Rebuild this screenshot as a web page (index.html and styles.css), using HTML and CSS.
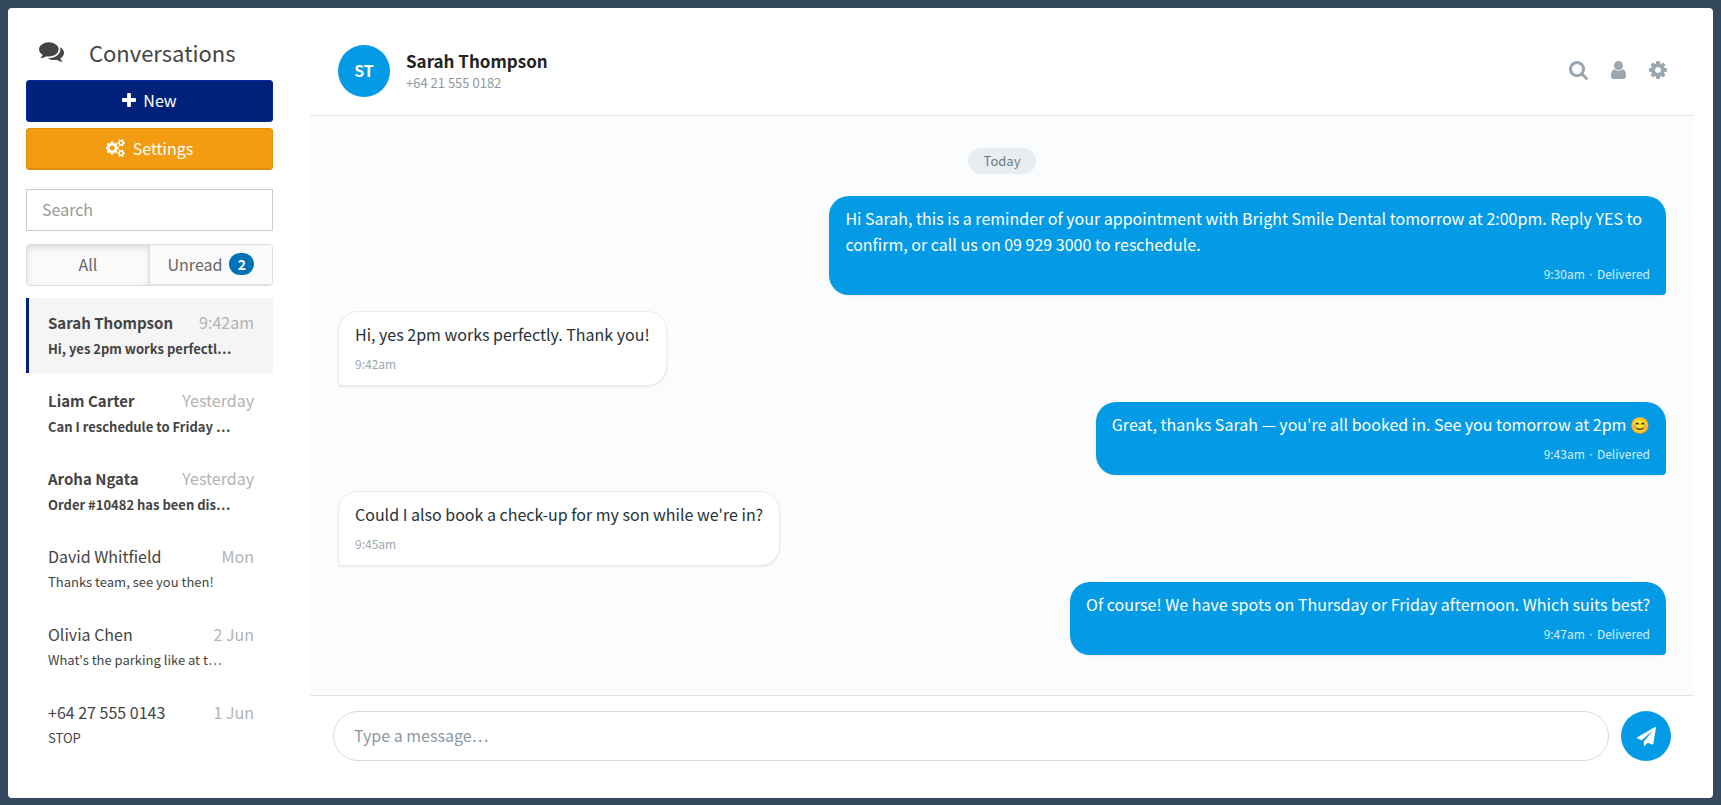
FILE: index.html
```html
<!DOCTYPE html>
<html lang="en">
<head>
    <meta charset="UTF-8">
    <meta name="viewport" content="width=device-width, initial-scale=1.0">
    <title>Conversations</title>
    <link rel="stylesheet" href="styles.css">
</head>
<body>
    <div class="app">
        <aside class="sidebar">
            <h1 class="sidebar-title">
                <svg class="icon-comments" viewBox="0 256 1792 1408" aria-hidden="true"><path d="M1408 768q0 139-94 257t-256.5 186.5-353.5 68.5q-86 0-176-16-124 88-278 128-36 9-86 16h-3q-11 0-20.5-8t-11.5-21q-1-3-1-6.5t.5-6.5 2-6l2.5-5 3.5-5.5 4-5 4.5-5 4-4.5q5-6 23-25t26-29.5 22.5-29 25-38.5 20.5-44q-124-72-195-177t-71-224q0-139 94-257t256.5-186.5 353.5-68.5 353.5 68.5 256.5 186.5 94 257zm384 256q0 120-71 224.5t-195 176.5q10 24 20.5 44t25 38.5 22.5 29 26 29.5 23 25q1 1 4 4.5t4.5 5 4 5 3.5 5.5l2.5 5 2 6 .5 6.5-1 6.5q-3 14-13 22t-22 7q-50-7-86-16-154-40-278-128-90 16-176 16-271 0-472-132 58 4 88 4 161 0 309-45t264-129q125-92 192-212t67-254q0-77-23-152 129 71 204 178t75 230z"/></svg>
                Conversations
            </h1>

            <div class="sidebar-actions">
                <button type="button" class="btn btn-new">
                    <svg class="icon-plus" viewBox="192 128 1408 1408" aria-hidden="true"><path d="M1600 736v192q0 40-28 68t-68 28h-416v416q0 40-28 68t-68 28h-192q-40 0-68-28t-28-68v-416h-416q-40 0-68-28t-28-68v-192q0-40 28-68t68-28h416v-416q0-40 28-68t68-28h192q40 0 68 28t28 68v416h416q40 0 68 28t28 68z"/></svg>
                    New
                </button>
                <button type="button" class="btn btn-settings">
                    <svg class="icon-cogs" viewBox="0 0 1920 1792" aria-hidden="true"><path d="M832 896q0-106-75-181t-181-75-181 75-75 181 75 181 181 75 181-75 75-181zm768 512q0-52-38-90t-90-38-90 38-38 90q0 53 37.5 90.5t90.5 37.5 90.5-37.5 37.5-90.5zm0-1024q0-52-38-90t-90-38-90 38-38 90q0 53 37.5 90.5t90.5 37.5 90.5-37.5 37.5-90.5zm-384 421v185q0 10-7 19.5t-16 10.5l-155 24q-11 35-32 76 34 48 90 115 7 11 7 20 0 12-7 19-23 30-82.5 89.5t-78.5 59.5q-11 0-21-7l-115-90q-37 19-77 31-11 108-23 155-7 24-30 24h-186q-11 0-20-7.5t-10-17.5l-23-153q-34-10-75-31l-118 89q-7 7-20 7-11 0-21-8-144-133-144-160 0-9 7-19 10-14 41-53t47-61q-23-44-35-82l-152-24q-10-1-17-9.5t-7-19.5v-185q0-10 7-19.5t16-10.5l155-24q11-35 32-76-34-48-90-115-7-11-7-20 0-12 7-20 22-30 82-89t79-59q11 0 21 7l115 90q34-18 77-32 11-108 23-154 7-24 30-24h186q11 0 20 7.5t10 17.5l23 153q34 10 75 31l118-89q8-7 20-7 11 0 21 8 144 133 144 160 0 8-7 19-12 16-42 54t-45 60q23 48 34 82l152 23q10 2 17 10.5t7 19.5zm640 533v140q0 16-149 31-12 27-30 52 51 113 51 138 0 4-4 7-122 71-124 71-8 0-46-47t-52-68q-20 2-30 2t-30-2q-14 21-52 68t-46 47q-2 0-124-71-4-3-4-7 0-25 51-138-18-25-30-52-149-15-149-31v-140q0-16 149-31 13-29 30-52-51-113-51-138 0-4 4-7 4-2 35-20t59-34 30-16q8 0 46 46.5t52 67.5q20-2 30-2t30 2q51-71 92-112l6-2q4 0 124 70 4 3 4 7 0 25-51 138 17 23 30 52 149 15 149 31zm0-1024v140q0 16-149 31-12 27-30 52 51 113 51 138 0 4-4 7-122 71-124 71-8 0-46-47t-52-68q-20 2-30 2t-30-2q-14 21-52 68t-46 47q-2 0-124-71-4-3-4-7 0-25 51-138-18-25-30-52-149-15-149-31v-140q0-16 149-31 13-29 30-52-51-113-51-138 0-4 4-7 4-2 35-20t59-34 30-16q8 0 46 46.5t52 67.5q20-2 30-2t30 2q51-71 92-112l6-2q4 0 124 70 4 3 4 7 0 25-51 138 17 23 30 52 149 15 149 31z"/></svg>
                    Settings
                </button>
            </div>

            <input class="search" type="text" placeholder="Search" aria-label="Search conversations">

            <div class="tabs">
                <button type="button" class="tab active">All</button>
                <button type="button" class="tab">Unread <span class="badge">2</span></button>
            </div>

            <ul class="conversations">
                <li class="conversation unread selected">
                    <div class="row"><span class="name">Sarah Thompson</span><span class="time">9:42am</span></div>
                    <div class="preview">Hi, yes 2pm works perfectl…</div>
                </li>
                <li class="conversation unread">
                    <div class="row"><span class="name">Liam Carter</span><span class="time">Yesterday</span></div>
                    <div class="preview">Can I reschedule to Friday …</div>
                </li>
                <li class="conversation unread">
                    <div class="row"><span class="name">Aroha Ngata</span><span class="time">Yesterday</span></div>
                    <div class="preview">Order #10482 has been dis…</div>
                </li>
                <li class="conversation">
                    <div class="row"><span class="name">David Whitfield</span><span class="time">Mon</span></div>
                    <div class="preview">Thanks team, see you then!</div>
                </li>
                <li class="conversation">
                    <div class="row"><span class="name">Olivia Chen</span><span class="time">2 Jun</span></div>
                    <div class="preview">What's the parking like at t…</div>
                </li>
                <li class="conversation">
                    <div class="row"><span class="name">+64 27 555 0143</span><span class="time">1 Jun</span></div>
                    <div class="preview">STOP</div>
                </li>
            </ul>
        </aside>

        <main class="chat">
            <header class="chat-header">
                <div class="avatar">ST</div>
                <div class="contact">
                    <h2>Sarah Thompson</h2>
                    <p>+64 21 555 0182</p>
                </div>
                <div class="chat-tools">
                    <button type="button" aria-label="Search messages">
                        <svg class="icon-search" viewBox="64 128 1664 1664"><path d="M1216 832q0-185-131.500-316.500t-316.500-131.500-316.500 131.500-131.500 316.500 131.500 316.500 316.500 131.500 316.500-131.500 131.500-316.500zm512 832q0 52-38 90t-90 38q-54 0-90-38l-343-342q-179 124-399 124-143 0-273.500-55.500t-225-150-150-225-55.500-273.500 55.500-273.500 150-225 225-150 273.500-55.500 273.500 55.500 225 150 150 225 55.500 273.500q0 220-124 399l343 343q37 37 37 90z"/></svg>
                    </button>
                    <button type="button" aria-label="Contact">
                        <svg class="icon-user" viewBox="256 128 1280 1536"><path d="M1536 1399q0 109-62.500 187t-150.500 78h-854q-88 0-150.500-78t-62.500-187q0-85 8.500-160.500t31.500-152 58.500-131 94-89 134.500-34.500q131 128 313 128t313-128q76 0 134.500 34.500t94 89 58.500 131 31.500 152 8.500 160.500zm-256-887q0 159-112.500 271.500t-271.500 112.500-271.500-112.500-112.500-271.500 112.500-271.500 271.500-112.500 271.500 112.500 112.500 271.500z"/></svg>
                    </button>
                    <button type="button" aria-label="Chat settings">
                        <svg class="icon-cog" viewBox="128 128 1536 1536"><path d="M1152 896q0-106-75-181t-181-75-181 75-75 181 75 181 181 75 181-75 75-181zm512-109v222q0 12-8 23t-20 13l-185 28q-19 54-39 91 35 50 107 138 10 12 10 25t-9 23q-27 37-99 108t-94 71q-12 0-26-9l-138-108q-44 23-91 38-16 136-29 186-7 28-36 28h-222q-14 0-24.500-8.500t-11.500-21.500l-28-184q-49-16-90-37l-141 107q-10 9-25 9-14 0-25-11-126-114-165-168-7-10-7-23 0-12 8-23 15-21 51-66.500t54-70.500q-27-50-41-99l-183-27q-13-2-21-12.500t-8-23.500v-222q0-12 8-23t19-13l186-28q14-46 39-92-40-57-107-138-10-12-10-24 0-10 9-23 26-36 98.500-107.500t94.500-71.500q13 0 26 10l138 107q44-23 91-38 16-136 29-186 7-28 36-28h222q14 0 24.500 8.500t11.500 21.500l28 184q49 16 90 37l142-107q9-9 24-9 13 0 25 10 129 119 165 170 7 8 7 22 0 12-8 23-15 21-51 66.500t-54 70.500q26 50 41 98l183 28q13 2 21 12.500t8 23.500z"/></svg>
                    </button>
                </div>
            </header>

            <section class="messages">
                <div class="day">Today</div>

                <div class="message sent">
                    <p>Hi Sarah, this is a reminder of your appointment with Bright Smile Dental tomorrow at 2:00pm. Reply YES to confirm, or call us on 09 929 3000 to reschedule.</p>
                    <div class="meta">9:30am · Delivered</div>
                </div>
                <div class="message received">
                    <p>Hi, yes 2pm works perfectly. Thank you!</p>
                    <div class="meta">9:42am</div>
                </div>
                <div class="message sent">
                    <p>Great, thanks Sarah — you're all booked in. See you tomorrow at 2pm <span class="emoji">😊</span></p>
                    <div class="meta">9:43am · Delivered</div>
                </div>
                <div class="message received">
                    <p>Could I also book a check-up for my son while we're in?</p>
                    <div class="meta">9:45am</div>
                </div>
                <div class="message sent">
                    <p>Of course! We have spots on Thursday or Friday afternoon. Which suits best?</p>
                    <div class="meta">9:47am · Delivered</div>
                </div>
            </section>

            <form class="composer">
                <input type="text" placeholder="Type a message…" aria-label="Message">
                <button type="button" aria-label="Send">
                    <svg class="icon-send" viewBox="0 0 1792 1792"><path d="M1764 11q33 24 27 64l-256 1536q-5 29-32 45-14 8-31 8-11 0-24-5l-453-185-242 295q-18 23-49 23-13 0-22-4-19-7-30.500-23.500t-11.500-36.500v-349l864-1059-1069 925-395-162q-37-14-40-55-2-40 32-59l1664-960q15-9 32-9 20 0 36 11z"/></svg>
                </button>
            </form>
        </main>
    </div>
</body>
</html>
```
FILE: styles.css
```css
* {
    box-sizing: border-box;
}
body {
    margin: 0;
    padding: 8px 8px 7px;
    min-height: 100vh;
    display: flex;
    background-color: #34495e;
    color: #444;
    font-family: "Noto Sans CJK KR", "Noto Sans", sans-serif;
    font-size: 16px;
    line-height: 26px;
}
h1, h2, p, ul {
    margin: 0;
    padding: 0;
}
button, input {
    font: inherit;
    color: inherit;
}
button {
    cursor: pointer;
}
svg {
    display: block;
    fill: currentColor;
}
.app {
    flex: 1;
    display: flex;
    background: #fff;
    border-radius: 4px;
}

/* Sidebar */
.sidebar {
    width: 302px;
    flex-shrink: 0;
    padding: 25px 37px 18px 18px;
}
.sidebar-title {
    display: flex;
    align-items: center;
    gap: 25px;
    height: 38px;
    padding-left: 13px;
    font-size: 22px;
    font-weight: 400;
}
.icon-comments {
    width: 25px;
    height: 20px;
}
.sidebar-actions {
    display: grid;
    gap: 6px;
    margin-top: 9px;
}
.btn {
    display: flex;
    align-items: center;
    justify-content: center;
    gap: 7px;
    height: 42px;
    padding: 0 0 2px;
    border: 1px solid;
    border-radius: 3px;
    color: #fff;
}
.btn-new {
    background: #002179;
    border-color: #002c9f;
}
.btn-settings {
    background: #f39c12;
    border-color: #e08e0b;
    box-shadow: inset 0 -1px 0 #e08e0b;
}
.icon-plus {
    width: 14px;
    height: 14px;
}
.icon-cogs {
    width: 20px;
    height: 18px;
}
.search {
    display: block;
    width: 100%;
    height: 42px;
    margin-top: 19px;
    padding: 0 15px 2px;
    border: 1px solid #ccc;
    background: #fff;
}
.search::placeholder {
    color: #999;
}
.tabs {
    display: flex;
    height: 42px;
    margin-top: 13px;
    border: 1px solid #ddd;
    border-radius: 4px;
    overflow: hidden;
}
.tab {
    flex: 1;
    display: flex;
    align-items: center;
    justify-content: center;
    gap: 7px;
    padding: 0 0 2px;
    border: 0;
    background: #fafafa;
    box-shadow: inset 0 -1px 0 #e4e4e4;
    color: #666;
}
.tab.active {
    border-right: 1px solid #ddd;
    box-shadow: inset 0 3px 6px rgba(0, 0, 0, 0.13);
}
.badge {
    min-width: 25px;
    height: 22px;
    border-radius: 11px;
    background: #0073b7;
    color: #fff;
    font-size: 14px;
    font-weight: 700;
    line-height: 22px;
    text-align: center;
}
.conversations {
    display: grid;
    gap: 3px;
    margin-top: 12px;
    list-style: none;
}
.conversation {
    min-width: 0;
    height: 75px;
    padding: 11px 19px;
    border-left: 3px solid transparent;
}
.conversation.selected {
    background: #f5f5f5;
    border-left-color: #002179;
}
.row {
    display: flex;
    align-items: baseline;
    justify-content: space-between;
}
.time {
    color: #b3b3b3;
}
.preview {
    font-size: 13px;
    white-space: nowrap;
}
.unread .name {
    font-size: 15px;
}
.unread .name,
.unread .preview {
    font-weight: 600;
}

/* Chat */
.chat {
    flex: 1;
    min-width: 0;
    display: flex;
    flex-direction: column;
    margin-right: 19px;
}
.chat-header {
    display: flex;
    align-items: center;
    gap: 16px;
    padding: 37px 27px 18px 28px;
    border-bottom: 1px solid #e5e8eb;
}
.avatar {
    width: 52px;
    height: 52px;
    border-radius: 50%;
    background: #039be5;
    color: #fff;
    font-weight: 600;
    line-height: 50px;
    text-align: center;
}
.contact h2 {
    color: #222;
    font-size: 17px;
    font-weight: 600;
    line-height: 24px;
}
.contact p {
    color: #90979d;
    font-size: 13px;
    line-height: 20px;
}
.chat-tools {
    display: flex;
    align-items: center;
    gap: 23px;
    margin-left: auto;
    padding-bottom: 2px;
    color: #9aa7b0;
}
.chat-tools button {
    padding: 0;
    border: 0;
    background: none;
}
.icon-search {
    width: 19px;
    height: 19px;
}
.icon-user {
    width: 15px;
    height: 18px;
}
.icon-cog {
    width: 18px;
    height: 18px;
}
.messages {
    flex: 1;
    display: flex;
    flex-direction: column;
    gap: 16px;
    padding: 32px 28px;
    background: #fbfcfe;
}
.day {
    align-self: center;
    margin-bottom: 6px;
    padding: 0 16px;
    border-radius: 13px;
    background: #e8edf1;
    color: #6c7a86;
    font-size: 13px;
}
.message {
    max-width: 63%;
    padding: 9px 16px 12px;
    border-radius: 20px;
    box-shadow: 0 1px 2px rgba(0, 0, 0, 0.08);
}
.message.sent {
    align-self: flex-end;
    border-bottom-right-radius: 4px;
    background: #039be5;
    color: #fff;
}
.message.received {
    align-self: flex-start;
    border: 1px solid #e9ecef;
    border-bottom-left-radius: 4px;
    background: #fff;
    color: #263238;
}
.meta {
    margin-top: 7px;
    color: #9aa7b0;
    font-size: 12px;
    line-height: 19px;
}
.sent .meta {
    color: #d5effb;
    text-align: right;
}
.composer {
    display: flex;
    gap: 12px;
    padding: 15px 23px 37px;
    border-top: 1px solid #e2e6e9;
}
.composer input {
    flex: 1;
    height: 50px;
    padding: 0 20px 2px;
    border: 1px solid #d8dce0;
    border-radius: 25px;
    background: #fff;
}
.composer input::placeholder {
    color: #8d99a3;
}
.composer button {
    display: flex;
    align-items: center;
    justify-content: center;
    width: 50px;
    height: 50px;
    padding: 0;
    border: 0;
    border-radius: 50%;
    background: #039be5;
    color: #fff;
}
.icon-send {
    width: 19px;
    height: 19px;
}
```
